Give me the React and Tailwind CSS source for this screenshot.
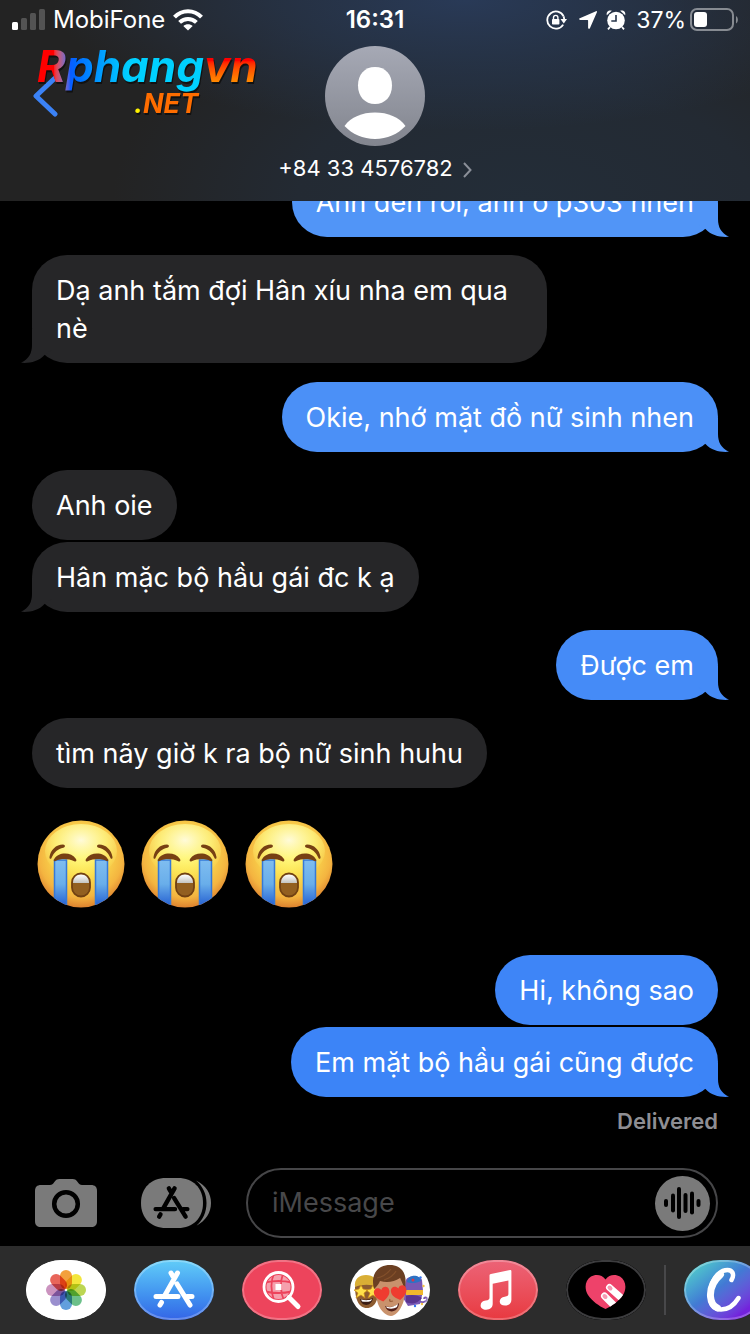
import { clsx } from 'clsx';

const messages = [
  { id: 1, from: 'me', text: 'Anh đến rồi, anh ở p303 nhen', tail: true, color: 'bg-[#5195f7] text-[#5195f7]', gap: '' },
  { id: 2, from: 'them', text: 'Dạ anh tắm đợi Hân xíu nha em qua nè', tail: true, gap: 'mt-[18px]' },
  { id: 3, from: 'me', text: 'Okie, nhớ mặt đồ nữ sinh nhen', tail: true, color: 'bg-[#4b90f7] text-[#4b90f7]', gap: 'mt-[19px]' },
  { id: 4, from: 'them', text: 'Anh oie', gap: 'mt-[18px]' },
  { id: 5, from: 'them', text: 'Hân mặc bộ hầu gái đc k ạ', tail: true, gap: 'mt-0.5' },
  { id: 6, from: 'me', text: 'Được em', tail: true, color: 'bg-[#458bf7] text-[#458bf7]', gap: 'mt-[18px]' },
  { id: 7, from: 'them', text: 'tìm nãy giờ k ra bộ nữ sinh huhu', gap: 'mt-[18px]' },
  { id: 8, from: 'them', emoji: 3, gap: 'mt-8' },
  { id: 9, from: 'me', text: 'Hi, không sao', color: 'bg-[#3e85f7] text-[#3e85f7]', gap: 'mt-[47px]' },
  { id: 10, from: 'me', text: 'Em mặt bộ hầu gái cũng được', tail: true, color: 'bg-[#3c84f7] text-[#3c84f7]', gap: 'mt-0.5' },
];

function StatusBar() {
  return (
    <div className="grid h-10 grid-cols-[1fr_auto_1fr] items-center px-3 text-2xl">
      <div className="flex items-center">
        <svg className="h-[22px] w-[33px]" viewBox="0 0 33 22" fill="#fff">
          <rect x="0" y="13" width="6" height="8" rx="1.5" />
          <g fillOpacity=".22">
            <rect x="9" y="9" width="6" height="12" rx="1.5" />
            <rect x="18" y="4" width="6" height="17" rx="1.5" />
            <rect x="27" y="0" width="6" height="21" rx="1.5" />
          </g>
        </svg>
        <span className="ml-2">MobiFone</span>
        <svg className="ml-2 h-[22px] w-[30px]" viewBox="0 0 30 22" fill="none" stroke="#fff" strokeWidth="4">
          <path d="M1.500 8.200C9 .2 21 .2 28.500 8.200" />
          <path d="M6.600 13.400c4.900-4.700 11.900-4.700 16.800 0" />
          <path d="M15 21.500l-4.700-4.500c2.600-2.300 6.800-2.300 9.400 0z" fill="#fff" stroke="none" />
        </svg>
      </div>
      <time className="font-semibold">16:31</time>
      <div className="flex items-center justify-end">
        <svg className="h-5 w-[21px]" viewBox="0 0 21 20" fill="none">
          <path d="M17.200 14.600A8.600 8.600 0 1 1 17.600 6.300" stroke="#fff" strokeWidth="1.800" />
          <path d="M17.600 6.300q.6 1.500.6 3.500" stroke="#fff" strokeWidth="1.800" />
          <path d="M14.500 9h6.500l-3.200 4.400z" fill="#fff" />
          <rect x="6" y="9" width="7.400" height="5.600" rx=".8" fill="#fff" />
          <path d="M7.500 9.500V7.600a2.200 2.200 0 0 1 4.400 0v1.900" stroke="#fff" strokeWidth="1.400" />
        </svg>
        <svg className="ml-3 h-[18px] w-[18px]" viewBox="0 0 18 18" fill="#fff">
          <path d="M17 .2c.7-.3 1.200.3.900 1L10.900 17.200c-.4.900-1.800.7-1.800-.4V9.700c0-.6-.2-.8-.8-.8H1.200C0 8.900-.3 7.600.8 7.200z" />
        </svg>
        <svg className="ml-[9px] h-5 w-5" viewBox="0 0 20 20">
          <path d="M.8 5.200C0 2 2.500 0 5.800.8zM19.200 5.200C20 2 17.500 0 14.200.8z" fill="#fff" />
          <path d="M4 17l-2 2.300M16 17l2 2.300" stroke="#fff" strokeWidth="1.800" />
          <circle cx="10" cy="10.500" r="8.800" fill="#fff" />
          <path d="M10 5v6H5.300" fill="none" stroke="#26344a" strokeWidth="1.600" />
        </svg>
        <span className="ml-2.5 text-[23px]">37%</span>
        <svg className="ml-1 h-6 w-12" viewBox="0 0 48 24">
          <rect x="1" y="1" width="42" height="21" rx="6" fill="none" stroke="#fff" strokeOpacity=".45" strokeWidth="2" />
          <rect x="4" y="4" width="13" height="15" rx="3" fill="#fff" />
          <path d="M46 8c2.500 1.500 2.500 6 0 7.500z" fill="#fff" fillOpacity=".45" />
        </svg>
      </div>
    </div>
  );
}

function SiteLogo() {
  return (
    <div className="pointer-events-none absolute left-[37px] top-[42px] font-bold italic drop-shadow-[1px_2px_0_#111]">
      <p className="text-[44px] leading-12">
        <span className="bg-linear-to-r from-[#ff0000] from-[10%] via-[#0b5cff] via-[20%] to-[#00d0ff] to-[55%] bg-clip-text text-transparent">
          Rphang
        </span>
        <span className="bg-linear-to-b from-[#ff0000] from-[40%] to-[#ff8a00] to-[80%] bg-clip-text pr-1 text-transparent">
          vn
        </span>
      </p>
      <p className="pl-[97px] text-[27px] leading-7 text-[#ff6d00]">
        <span className="text-[#fff200]">.</span>NET
      </p>
    </div>
  );
}

function Header() {
  return (
    <header className="relative z-10 h-[201px] bg-[#232323] bg-[radial-gradient(ellipse_55%_65%_at_62%_0%,#293a57_0%,#273750b0_45%,transparent_100%),radial-gradient(ellipse_55%_110%_at_70%_100%,#232d38_0%,#232a33_55%,transparent_100%)]">
      <StatusBar />
      <div className="flex items-start px-8 pt-1.5">
        <div className="flex-1 pt-[29px]">
          <button aria-label="Back" className="block">
            <svg className="h-[42px] w-7" viewBox="0 0 28 42" fill="none" stroke="#3b82f6" strokeWidth="5" strokeLinecap="round" strokeLinejoin="round">
              <path d="M22.500 3.500L4 21l19 18" />
            </svg>
          </button>
        </div>
        <button className="flex flex-col items-center">
          <svg className="size-[100px]" viewBox="0 0 100 100">
            <defs>
              <linearGradient id="avatar" x2="0" y2="1">
                <stop stopColor="#a6a9b5" />
                <stop offset="1" stopColor="#82858e" />
              </linearGradient>
            </defs>
            <circle cx="50" cy="50" r="50" fill="url(#avatar)" />
            <path d="M50 21c10.500 0 17 7.500 17 18.500S60 58 50 58s-17-7.500-17-18.500S39.500 21 50 21z" fill="#fff" />
            <path d="M19.500 80C26 71 37 66.500 50 66.500S74 71 80.500 80C73 88 62 93 50 93s-23-5-30.500-13z" fill="#fff" />
          </svg>
          <span className="mt-[7px] flex items-center gap-2.5 text-[22px] leading-[30px]">
            +84 33 4576782
            <svg className="mt-1 h-4 w-[9px]" viewBox="0 0 9 16" fill="none" stroke="#8a8f98" strokeWidth="2">
              <path d="M1 1l6.500 7L1 15" />
            </svg>
          </span>
        </button>
        <div className="flex-1" />
      </div>
      <SiteLogo />
    </header>
  );
}

function CryingFace() {
  return (
    <svg className="size-22" viewBox="0 0 88 88">
      <defs>
        <radialGradient id="face" cx=".5" cy=".4" r=".62">
          <stop stopColor="#fff35c" />
          <stop offset=".45" stopColor="#fada4e" />
          <stop offset=".78" stopColor="#f4b440" />
          <stop offset="1" stopColor="#d97a2c" />
        </radialGradient>
        <radialGradient id="shine" cx=".5" cy=".3" r=".7">
          <stop stopColor="#fffce0" stopOpacity=".95" />
          <stop offset=".5" stopColor="#fff98a" stopOpacity=".7" />
          <stop offset="1" stopColor="#fff066" stopOpacity="0" />
        </radialGradient>
        <linearGradient id="tear" x2="0" y2="1">
          <stop stopColor="#7fbdf0" />
          <stop offset=".5" stopColor="#69aeea" />
          <stop offset="1" stopColor="#1f59cf" />
        </linearGradient>
        <linearGradient id="teeth" x2="0" y2="1">
          <stop stopColor="#fff" />
          <stop offset="1" stopColor="#c4c4c0" />
        </linearGradient>
        <clipPath id="faceClip"><circle cx="44" cy="44" r="43.500" /></clipPath>
      </defs>
      <circle cx="44" cy="44" r="43.500" fill="url(#face)" />
      <ellipse cx="44" cy="31" rx="36" ry="27" fill="url(#shine)" />
      <g clipPath="url(#faceClip)" fill="url(#tear)" stroke="#3579d8" strokeWidth="1.500">
        <rect x="17.500" y="40" width="12" height="48" />
        <rect x="58.500" y="40" width="12" height="48" />
      </g>
      <g fill="#774013">
        <path d="M12.500 37c1-7 6.500-12.500 13.500-12.500 2.500.2 2.600 2.700.3 3.200C21 28.800 17 32 14.500 38c-.6 1.500-2.200 1-2-1z" />
        <path d="M75.500 37c-1-7-6.500-12.500-13.500-12.500-2.500.2-2.600 2.700-.3 3.200C67 28.800 71 32 73.500 38c.6 1.500 2.200 1 2-1z" />
        <path d="M17 39.500c4-7.500 17-8 22-.5 1 1.800 0 3-1.700 2.200C31 38.400 24 38.300 18.500 41c-1.500.7-2.200-.2-1.500-1.500z" />
        <path d="M71 39.500c-4-7.500-17-8-22-.5-1 1.800 0 3 1.700 2.200C57 38.400 64 38.300 69.500 41c1.500.7 2.200-.2 1.500-1.500z" />
      </g>
      <rect x="35" y="53.500" width="18" height="23" rx="9" fill="#925f20" stroke="#704012" strokeWidth="1.800" />
      <path d="M36 63c0-5.500 3.500-8.500 8-8.500s8 3 8 8.500z" fill="url(#teeth)" />
    </svg>
  );
}

function Tail({ mine }) {
  return (
    <svg
      className={clsx('absolute bottom-0 h-[34px] w-8', mine ? '-right-[11px]' : '-left-[11px] -scale-x-100')}
      viewBox="0 0 32 34"
    >
      <path d="M0 20V0h21v16c0 8 3 14 11 17.800C23 34.500 14.500 32.500 8.500 26z" fill="currentColor" />
    </svg>
  );
}

function Message({ message }) {
  const mine = message.from === 'me';

  if (message.emoji) {
    return (
      <li className={clsx('flex gap-4 pl-[5px]', message.gap)} aria-label="😭😭😭">
        {Array.from({ length: message.emoji }, (_, i) => <CryingFace key={i} />)}
      </li>
    );
  }

  return (
    <li
      className={clsx(
        'relative w-fit max-w-[75%] rounded-[35px] px-6 pt-[17px] pb-[15px]',
        mine ? 'self-end' : 'bg-[#262628] text-[#262628]',
        message.color,
        message.gap
      )}
    >
      {message.tail && <Tail mine={mine} />}
      <p className="relative text-[27px] leading-[38px] text-white">{message.text}</p>
    </li>
  );
}

function AppStoreGlyph({ className, color }) {
  return (
    <svg className={className} viewBox="0 0 42 38" fill="none" stroke={color} strokeWidth="5" strokeLinecap="round">
      <path d="M18 3l2 3.500M24.500 3L11.500 26M24 14l13 21M3 26.500h22M34 26.500h5M8.500 32.500L7 35" />
    </svg>
  );
}

function Composer() {
  const bars = [
    [18, 16, 4],
    [25, 10.5, 15],
    [31, 4, 28],
    [37.5, 10, 16],
    [44, 8.5, 19],
    [50.5, 16, 4],
  ];

  return (
    <form className="flex items-center px-8 pb-2" onSubmit={(e) => e.preventDefault()}>
      <button type="button" aria-label="Camera" className="ml-[3px] shrink-0">
        <svg className="h-12 w-[62px]" viewBox="0 0 62 48">
          <path d="M6 6h9c2 0 3-1 4-2.500C20.500 1 22 0 24.500 0h13c2.500 0 4 1 5.500 3.500C44 5 45 6 47 6h9c4 0 6 2 6 6v30c0 4-2 6-6 6H6c-4 0-6-2-6-6V12c0-4 2-6 6-6z" fill="#7a7a7a" />
          <circle cx="31" cy="25" r="11.800" fill="none" stroke="#000" strokeWidth="4.500" />
        </svg>
      </button>
      <button type="button" aria-label="Apps" className="relative ml-11 shrink-0">
        <svg className="h-[50px] w-[70px]" viewBox="0 0 70 50" fill="#7a7a7a">
          <path d="M25 0h12c15 0 25 10 25 25S52 50 37 50H25C10 50 0 40 0 25S10 0 25 0z" />
          <path d="M55 2.500c10 5 15 13 15 22.500s-5 17.500-15 23c7-6 10.500-14 10.500-23S62 8.500 55 2.500z" />
        </svg>
        <AppStoreGlyph className="absolute left-3 top-[7px] h-[35px] w-[37px]" color="#000" />
      </button>
      <div className="ml-[35px] flex h-[70px] min-w-0 flex-1 items-center rounded-full border-2 border-[#464648] pl-6 pr-1.5">
        <input
          type="text"
          aria-label="iMessage"
          placeholder="iMessage"
          className="min-w-0 flex-1 bg-transparent text-[27px] leading-[38px] text-white outline-none placeholder:text-[#48484a]"
        />
        <button type="button" aria-label="Record audio" className="size-[55px] shrink-0 rounded-full bg-[#7a7a7a]">
          <svg className="h-9 w-full" viewBox="7 0 55 36" stroke="#000" strokeWidth="4" strokeLinecap="round">
            {bars.map(([x, y, h]) => (
              <path key={x} d={`M${x} ${y}v${h}`} />
            ))}
          </svg>
        </button>
      </div>
    </form>
  );
}

const petals = ['#f3a03c', '#f3e63c', '#bcd653', '#6cc08a', '#629fdd', '#9a8fce', '#cb93bf', '#e8655a'];

function PhotosIcon() {
  return (
    <svg viewBox="0 0 80 60" className="size-full bg-white">
      {petals.map((color, i) => (
        <rect
          key={color}
          x="34"
          y="10"
          width="12"
          height="19"
          rx="6"
          fill={color}
          className="mix-blend-multiply"
          transform={`rotate(${i * 45} 40 30)`}
        />
      ))}
    </svg>
  );
}

function StoreIcon() {
  return (
    <div className="flex size-full items-center justify-center bg-linear-to-b from-[#62cdf8] to-[#3464e6]">
      <AppStoreGlyph className="mb-0.5 h-[38px] w-[42px]" color="#fff" />
    </div>
  );
}

function ImageSearchIcon() {
  return (
    <svg viewBox="0 0 80 60" className="size-full bg-[#ed445c]" fill="none">
      <circle cx="36.500" cy="27" r="12" fill="#f5a0ad" />
      <path d="M32 13.500c-4 9-3 18 0 27M41 13.500c-3 9-3 18 1 27M23 22.500c9-2 18-2 27 0M23 31.500c9 2 18 2 27 0" stroke="#ed445c" strokeWidth="1.800" />
      <rect x="33.500" y="24" width="6" height="6" fill="#fff" />
      <circle cx="36.500" cy="27" r="14.500" stroke="#fff" strokeWidth="2.800" />
      <path d="M47 37.500l9 9" stroke="#fff" strokeWidth="5" strokeLinecap="round" />
    </svg>
  );
}

const heartEye = 'M0 7.500C-4 5-8 2-7.800-2.500-7.500-7-2-8 0-4 2-8 7.500-7 7.800-2.500 8 2 4 5 0 7.500z';

function MemojiIcon() {
  return (
    <svg viewBox="0 0 80 60" className="size-full bg-white">
      {/* left: beanie and star glasses */}
      <path d="M5 26c0-4 24-4 23 0 1 12-2 22-11 22S5 38 5 26z" fill="#8d5c30" />
      <path d="M10 39c4 1 9 1 13-1-1 8-11 10-13 1z" fill="#3a1d14" />
      <path d="M11 39.500c4 1 8 1 11-.5l-1 2c-3 1-6 1-9 .5z" fill="#fff" />
      <path d="M5 27c-1-8 4-12 11-12s12 4 12 12c-7-3-16-3-23 0z" fill="#d9ae35" />
      <path d="M11 25l2 4 5 1-4 3 1 5-4-3-5 3 2-5-4-3 5-1zM23 25l2 4 4 1-3 3 1 5-4-3-5 3 2-5-4-3 5-1z" fill="#ffe14a" stroke="#c88a18" strokeWidth=".7" />
      {/* right: purple character with a party hat and confetti */}
      <path d="M56 20c2-5 14-5 16 0l1 11-3 13-12 2-5-8z" fill="#7958b4" />
      <path d="M57 22c1-8 13-8 14-1-4 2-10 3-14 1z" fill="#2d72c4" />
      <circle cx="63" cy="20" r="1.500" fill="#d9364b" />
      <path d="M55 30h18v5H56z" fill="#f0b62d" />
      <path d="M56 36c5-2 12-1 16 2-4 5-9 7-16 4z" fill="#593590" />
      <path d="M69 41c3 2 8 1 8-2 0-2-3-2-3 0" fill="none" stroke="#7958b4" strokeWidth="1.800" />
      <g fill="#3474ef">
        <circle cx="70.500" cy="17.500" r="1.200" />
        <circle cx="65" cy="46" r="1.200" />
      </g>
      <g fill="#f6c445">
        <circle cx="73.500" cy="26" r="1.200" />
        <circle cx="72" cy="44" r="1.200" />
      </g>
      {/* middle: heart-eyed face */}
      <path d="M25 25c0-12 30-12 30 0 0 5 0 13-2 18-3 8-8 13-12 13s-10-4-13-12c-2-6-3-13-3-19z" fill="#c9926c" />
      <path d="M24 29C20 14 28 5 40 5c11 0 18 8 15 24-2-4-3-7-5-11-6 4-13 5-20 3-1 3-3 5-6 8z" fill="#6b3f22" />
      <path d="M27 18c6-1 10-4 14-9M34 20c6-2 10-5 12-9" fill="none" stroke="#83502b" strokeWidth="1.200" />
      <g fill="#ef3b30">
        <path d={heartEye} transform="translate(32 34) rotate(-10)" />
        <path d={heartEye} transform="translate(49 32.500) rotate(-10)" />
      </g>
      <path d="M35 46c5 2 10 1 14-3 0 9-11 12-14 3z" fill="#522019" />
      <path d="M36 46.500c4 1.500 8 .5 12-2.500l-1 3c-3 2-7 2-10 1z" fill="#fff" />
      <path d="M40 39c-1 2 0 3 3 2" fill="none" stroke="#9b5f39" strokeWidth="1.300" />
    </svg>
  );
}

function MusicIcon() {
  return (
    <div className="size-full bg-linear-to-b from-[#ec6377] to-[#e8383f]">
      <svg viewBox="0 0 80 60" className="size-full" fill="#fff">
        <path d="M31.500 15.500c0-1 .4-1.400 1.400-1.600L52 10.100c.9-.2 1.400.2 1.400 1.100v28.600c0 3.600-2.400 5.800-6.400 5.800-3.300 0-5.300-1.700-5.300-4.100 0-2.600 2-4.200 5-4.700 2.900-.5 3.700-1 3.700-3V20.500l-15.700 3.200v20.100c0 3.700-2.400 5.900-6.600 5.900-3.300 0-5.500-1.800-5.500-4.300 0-2.600 2-4.300 5.100-4.800 2.900-.4 3.800-1 3.800-3z" />
      </svg>
    </div>
  );
}

function DigitalTouchIcon() {
  return (
    <svg viewBox="0 0 80 60" className="size-full bg-black">
      <defs>
        <clipPath id="heart">
          <path d="M39.500 19.500C43 14 50 14 54 16.500c6 4 7 12 3 18.500-4 6-11 11-17.500 14C33 46 26 41 22 35c-4-6.500-3-14.500 3-18.500 4-2.500 11-2.500 14.500 3z" />
        </clipPath>
      </defs>
      <g clipPath="url(#heart)">
        <path d="M18 10h44v42H18z" fill="#ee426a" />
        <g stroke="#fff" strokeWidth="7" strokeLinecap="round">
          <path d="M43.500 27.500l18 16M38.500 36l14 14" />
        </g>
        <g stroke="#f59bb3" strokeWidth="4" strokeLinecap="round">
          <path d="M43.500 27.500l1 1M38.500 36l1 1" />
        </g>
      </g>
    </svg>
  );
}

function CIcon() {
  return (
    <div className="size-full bg-linear-to-br from-[#4fc0cc] from-15% via-[#4279d4] via-45% to-[#7322dc] to-80%">
      <svg viewBox="0 0 80 60" className="size-full" fill="none" stroke="#fff" strokeLinecap="round" strokeLinejoin="round">
        <path d="M47.500 20c3-5 1.500-10-4-10C34 10 26 22 26 35c0 9 4 14.500 11 14.500 7 0 13-4 17.500-11.500" strokeWidth="4.500" />
        <path d="M36.500 14.500C29 21 26 29 26.500 36.500c.5 6 3 10 7 11.500" strokeWidth="7" />
      </svg>
    </div>
  );
}

const apps = [
  { name: 'Photos', Icon: PhotosIcon, ring: 'after:border-white' },
  { name: 'App Store', Icon: StoreIcon, ring: 'after:border-white/25' },
  { name: 'Images', Icon: ImageSearchIcon, ring: 'after:border-white/25' },
  { name: 'Memoji', Icon: MemojiIcon, ring: 'after:border-white/25' },
  { name: 'Music', Icon: MusicIcon, ring: 'after:border-white/25' },
  { name: 'Digital Touch', Icon: DigitalTouchIcon, ring: 'after:border-[#3c3c3e]' },
];

function AppButton({ name, Icon, ring }) {
  return (
    <button
      aria-label={name}
      className={clsx(
        'relative isolate h-[60px] w-20 shrink-0 overflow-hidden rounded-[36px/30px]',
        'after:absolute after:inset-0 after:rounded-[36px/30px] after:border-2',
        ring
      )}
    >
      <Icon />
    </button>
  );
}

function AppDrawer() {
  return (
    <nav className="flex h-22 items-center gap-7 overflow-hidden bg-[#2c2c2c] pl-[26px]">
      {apps.map((app) => (
        <AppButton key={app.name} {...app} />
      ))}
      <div className="-mx-2.5 h-[50px] w-0.5 shrink-0 bg-[#48484a]" />
      <AppButton name="C" Icon={CIcon} ring="after:border-white/25" />
    </nav>
  );
}

function App() {
  return (
    <div className="flex min-h-screen flex-col overflow-hidden bg-black font-['Inter','Noto_Sans',sans-serif] text-white">
      <Header />
      <main className="-mt-[34px] flex-1 px-8">
        <ul className="flex flex-col">
          {messages.map((message) => (
            <Message key={message.id} message={message} />
          ))}
        </ul>
        <p className="mt-2.5 text-right text-[22px] leading-7 font-semibold text-[#8e8e93]">Delivered</p>
      </main>
      <Composer />
      <AppDrawer />
    </div>
  );
}

export default App;
